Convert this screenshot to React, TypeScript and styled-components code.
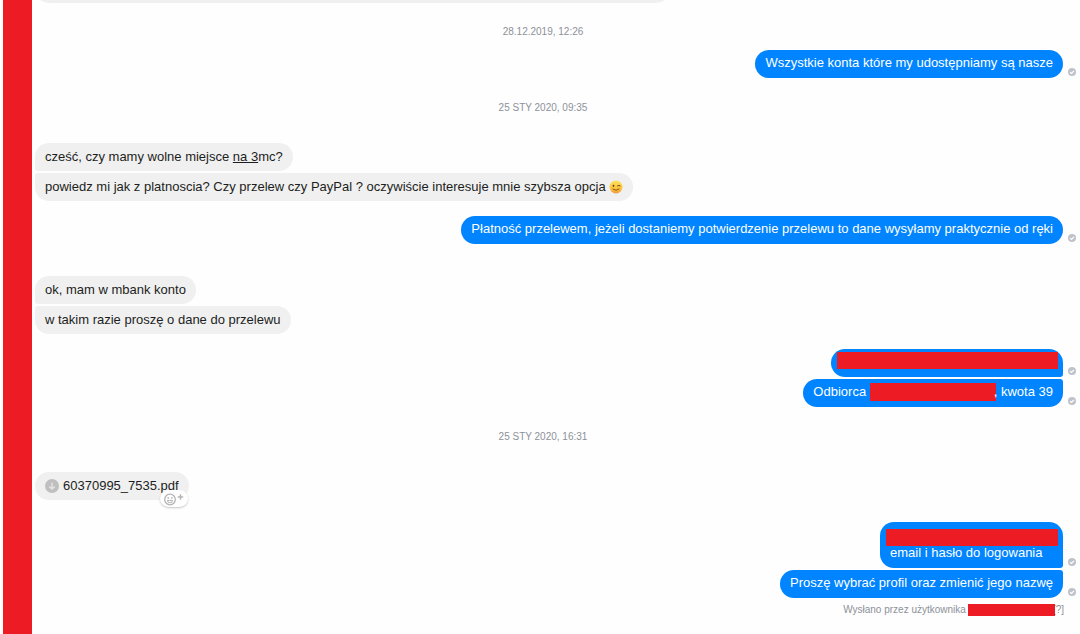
import React from "react";
import styled, { createGlobalStyle, css } from "styled-components";

const GlobalStyle = createGlobalStyle`
  * { box-sizing: border-box; }
  body {
    margin: 0;
    background: #fefefe;
    font-family: "Liberation Sans", Arial, Helvetica, sans-serif;
    font-size: 13px;
    line-height: 18px;
  }
`;

const Page = styled.div`
  display: flex;
  min-height: 100vh;
  padding-left: 3px;
  overflow: hidden;
`;

const Rail = styled.aside`
  flex: 0 0 29px;
  background: #ed1c24;
`;

const Thread = styled.main`
  flex: 1;
  min-width: 0;
  display: flex;
  flex-direction: column;
  padding: 0 4px 16px 3px;
`;

const Stamp = styled.time`
  margin: 24px 25px -3px 0;
  text-align: center;
  font-size: 10px;
  line-height: 12px;
  color: #8d9199;
  text-transform: uppercase;
`;

const Group = styled.section<{ $out?: boolean }>`
  display: flex;
  flex-direction: column;
  align-items: ${(p) => (p.$out ? "flex-end" : "flex-start")};
  gap: 2px;
  margin-top: ${(p) => (p.$out ? 15 : 32)}px;
`;

const EarlierGroup = styled(Group)`
  margin: -25px 0 -1px;
`;

const Row = styled.div`
  display: flex;
  align-items: flex-end;
  gap: 5px;
`;

type Place = "single" | "first" | "last";

const radii = {
  in: { single: "14px", first: "14px 14px 14px 3px", last: "3px 14px 14px 14px" },
  out: { single: "14px", first: "14px 14px 3px 14px", last: "14px 3px 14px 14px" },
};

const Bubble = styled.div<{ $out?: boolean; $place?: Place }>`
  min-height: 28px;
  ${(p) =>
    p.$out
      ? css`
          padding: 4px 10px 6px;
          background: #0084ff;
          color: #fff;
        `
      : css`
          padding: 5px 10px;
          background: #f0f0f0;
          color: #1c1e21;
        `}
  border-radius: ${(p) => radii[p.$out ? "out" : "in"][p.$place ?? "single"]};
`;

const EarlierBubble = styled(Bubble)`
  width: 635px;
  max-width: 100%;
`;

const CensoredBubble = styled(Bubble)`
  padding-top: 3px;
`;

const TallBubble = styled(Bubble)`
  padding-top: 7px;
`;

const Censor = styled.span<{ $w: number }>`
  display: inline-block;
  width: ${(p) => p.$w}px;
  height: 18px;
  margin-right: -2px;
  background: #ed1c24;
  vertical-align: top;
`;

const CensorLine = styled(Censor)`
  display: block;
  height: 17px;
  margin: 0 -5px -2px -4px;
`;

const Status = styled.span`
  display: flex;
  width: 8px;
  height: 8px;
  margin-bottom: 2px;
`;

const Emoji = styled.svg`
  width: 14px;
  height: 14px;
  vertical-align: -3px;
`;

const Attachment = styled.div`
  position: relative;
  padding-bottom: 7px;
`;

const FileLink = styled.a`
  display: flex;
  align-items: center;
  gap: 4px;
  color: inherit;
  text-decoration: none;
`;

const ReactButton = styled.button`
  position: absolute;
  right: 1px;
  bottom: 0;
  display: flex;
  align-items: center;
  width: 28px;
  height: 17px;
  padding: 0 4px;
  border: 0;
  border-radius: 9px;
  background: #fff;
  box-shadow: 0 1px 2px rgba(0, 0, 0, 0.22);
`;

const Sender = styled.p`
  display: flex;
  align-items: center;
  justify-content: flex-end;
  margin: 5px 12px 0 0;
  font-size: 10px;
  line-height: 14px;
  color: #8d9199;
`;

const SenderCensor = styled(Censor)`
  position: relative;
  height: 12px;
  margin: 0 -2px 0 2px;
`;

const Sent = () => (
  <Status>
    <svg width="8" height="8" viewBox="0 0 8 8" role="img" aria-label="Wysłano">
      <circle cx="4" cy="4" r="4" fill="#bec2c9" />
      <path d="M2 4.1 3.5 5.5 6 2.8" fill="none" stroke="#fff" strokeWidth="1.2" />
    </svg>
  </Status>
);

const Wink = () => (
  <Emoji viewBox="0 0 14 14" role="img" aria-label="oczko">
    <defs>
      <linearGradient id="face" x1="0" y1="0" x2="0" y2="1">
        <stop offset="0" stopColor="#ffe15c" />
        <stop offset="0.6" stopColor="#fdc53b" />
        <stop offset="1" stopColor="#f0983a" />
      </linearGradient>
    </defs>
    <circle cx="7" cy="7" r="6.5" fill="url(#face)" />
    <ellipse cx="4.5" cy="5.8" rx="0.9" ry="1.1" fill="#5b4326" />
    <path d="M8.2 6.1Q9.8 4.9 11.4 6" fill="none" stroke="#5b4326" strokeWidth="1" />
    <path d="M3.6 8.8Q7 11.6 10.4 8.8" fill="none" stroke="#8a5a22" strokeWidth="1" />
  </Emoji>
);

const Sending = ({ children }: { children: React.ReactNode }) => (
  <Row>
    {children}
    <Sent />
  </Row>
);

export default function App() {
  return (
    <>
      <GlobalStyle />
      <Page>
        <Rail />
        <Thread>
          <EarlierGroup>
            <EarlierBubble />
          </EarlierGroup>

          <Stamp>28.12.2019, 12:26</Stamp>
          <Group $out>
            <Sending>
              <Bubble $out>Wszystkie konta które my udostępniamy są nasze</Bubble>
            </Sending>
          </Group>

          <Stamp>25 sty 2020, 09:35</Stamp>
          <Group>
            <Bubble $place="first">
              cześć, czy mamy wolne miejsce <u>na 3</u>mc?
            </Bubble>
            <Bubble $place="last">
              powiedz mi jak z platnoscia? Czy przelew czy PayPal ? oczywiście interesuje mnie szybsza opcja <Wink />
            </Bubble>
          </Group>
          <Group $out>
            <Sending>
              <Bubble $out>
                Płatność przelewem, jeżeli dostaniemy potwierdzenie przelewu to dane wysyłamy praktycznie od ręki
              </Bubble>
            </Sending>
          </Group>
          <Group>
            <Bubble $place="first">ok, mam w mbank konto</Bubble>
            <Bubble $place="last">w takim razie proszę o dane do przelewu</Bubble>
          </Group>
          <Group $out>
            <Sending>
              <CensoredBubble $out $place="first">
                <CensorLine $w={221} />
              </CensoredBubble>
            </Sending>
            <Sending>
              <Bubble $out $place="last">
                Odbiorca <Censor $w={126} />, kwota 39
              </Bubble>
            </Sending>
          </Group>

          <Stamp>25 sty 2020, 16:31</Stamp>
          <Group>
            <Attachment>
              <Bubble>
                <FileLink href="#">
                  <svg width="14" height="14" viewBox="0 0 14 14" aria-hidden="true">
                    <circle cx="7" cy="7" r="7" fill="#bfbfbf" />
                    <path d="M7 3.5V10M4.3 7.4 7 10.1 9.7 7.4" fill="none" stroke="#e6e6e6" strokeWidth="1.4" />
                  </svg>
                  60370995_7535.pdf
                </FileLink>
              </Bubble>
              <ReactButton type="button" aria-label="Dodaj reakcję">
                <svg width="20" height="14" viewBox="0 0 20 14" fill="none" stroke="#b4b4b4" aria-hidden="true">
                  <circle cx="6" cy="7.5" r="5.3" strokeWidth="1.3" />
                  <path d="M3.4 8.4h5.2a2.6 2.4 0 0 1-5.2 0Z" strokeWidth="1" />
                  <path d="M4.2 5v1.7M7.8 5v1.7" strokeWidth="1.3" />
                  <path d="M16.5 2.3v5.4M13.8 5h5.4" strokeWidth="1.4" />
                </svg>
              </ReactButton>
            </Attachment>
          </Group>
          <Group $out>
            <Sending>
              <TallBubble $out $place="first">
                <CensorLine $w={172} />
                email i hasło do logowania
              </TallBubble>
            </Sending>
            <Sending>
              <Bubble $out $place="last">Proszę wybrać profil oraz zmienić jego nazwę</Bubble>
            </Sending>
          </Group>
          <Sender>
            Wysłano przez użytkownika <SenderCensor $w={87} />
            [?]
          </Sender>
        </Thread>
      </Page>
    </>
  );
}
